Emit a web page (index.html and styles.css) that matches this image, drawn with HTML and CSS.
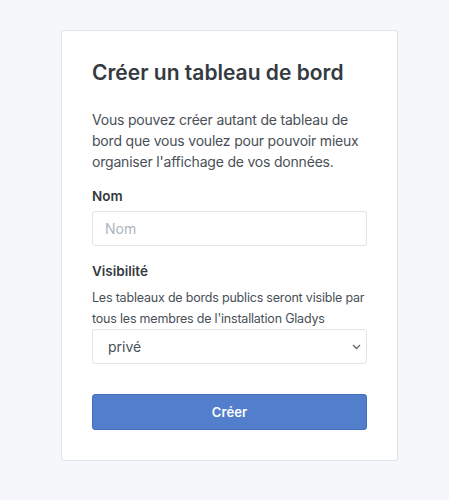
FILE: index.html
```html
<!DOCTYPE html>
<html lang="fr">
<head>
<meta charset="utf-8">
<link rel="stylesheet" href="styles.css">
</head>
<body>
<div class="page">
  <div class="card">
    <h3 class="title">Créer un tableau de bord</h3>
    <p class="intro">Vous pouvez créer autant de tableau de bord que vous voulez pour pouvoir mieux organiser l'affichage de vos données.</p>
    <div class="group">
      <label class="label">Nom</label>
      <input class="input" type="text" placeholder="Nom">
    </div>
    <div class="group group-vis">
      <label class="label">Visibilité</label>
      <div class="help">Les tableaux de bords publics seront visible par tous les membres de l'installation Gladys</div>
      <div class="select">
        <span class="select-value">privé</span>
        <svg class="chev" width="9" height="6" viewBox="0 0 9 6"><path d="M1 1l3.5 3.5L8 1" fill="none" stroke="#666" stroke-width="1.3"/></svg>
      </div>
    </div>
    <button class="btn">Créer</button>
  </div>
</div>
</body>
</html>
```
FILE: styles.css
```css
html, body {
  margin: 0;
  padding: 0;
  background: #f5f7fb;
}
body {
  font-family: Inter, "Noto Sans", sans-serif;
  color: #495057;
}
.page {
  padding: 30px 0 0 61px;
}
.card {
  width: 275px;
  padding: 30px 30px 30px 30px;
  background: #fff;
  border: 1px solid rgba(0, 40, 100, 0.12);
  border-radius: 3px;
}
.title {
  margin: 0;
  font-size: 21px;
  font-weight: 600;
  line-height: 24px;
  color: #343a40;
  letter-spacing: 0;
}
.intro {
  margin: 24px 0 0 0;
  font-size: 14px;
  line-height: 21px;
  letter-spacing: -0.2px;
  color: #495057;
}
.group {
  margin-top: 14px;
}
.group-vis {
  margin-top: 15px;
}
.label {
  display: block;
  font-size: 13.5px;
  font-weight: 600;
  line-height: 20px;
  color: #343a40;
  margin-bottom: 5px;
}
.input {
  box-sizing: border-box;
  display: block;
  width: 275px;
  height: 35px;
  margin: 0;
  padding: 0 12px;
  border: 1px solid rgba(0, 40, 100, 0.12);
  border-radius: 3px;
  font-family: inherit;
  font-size: 14px;
  color: #495057;
  background: #fff;
  outline: none;
}
.input::placeholder {
  color: #adb5bd;
}
.help {
  font-size: 12.5px;
  line-height: 21px;
  letter-spacing: -0.2px;
  color: #495057;
  margin-top: 6px;
}
.select {
  box-sizing: border-box;
  width: 275px;
  height: 35px;
  display: flex;
  align-items: center;
  justify-content: space-between;
  padding: 0 5px 0 15px;
  border: 1px solid rgba(0, 40, 100, 0.12);
  border-radius: 3px;
}
.select-value {
  font-size: 14px;
  color: #495057;
}
.btn {
  display: block;
  width: 275px;
  height: 36px;
  margin: 30px 0 0 0;
  padding: 0;
  background: #527ecb;
  border: 1px solid #3f6fc2;
  border-radius: 3px;
  color: #fff;
  font-family: inherit;
  font-size: 13px;
  font-weight: 600;
  letter-spacing: 0.1px;
}
```
